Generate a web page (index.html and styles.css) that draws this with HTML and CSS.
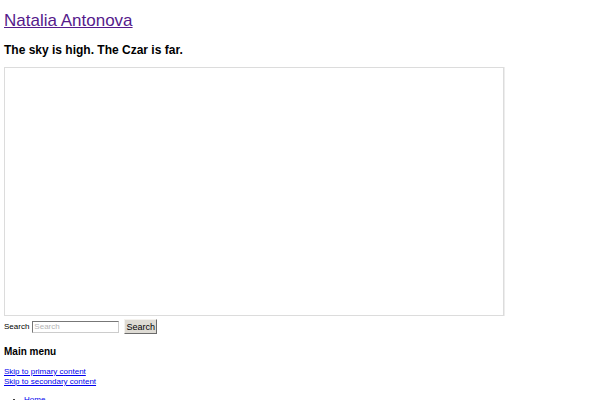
FILE: index.html
```html
<!DOCTYPE html>
<html>
<head>
<meta charset="utf-8">
<title>Natalia Antonova</title>
<link rel="stylesheet" href="styles.css">
</head>
<body>
<header class="site-header">
  <h1 class="site-title"><a href="#">Natalia Antonova</a></h1>
  <h2 class="site-description">The sky is high. The Czar is far.</h2>
  <div class="header-frame"></div>
  <form class="search-form">
    <label class="search-label" for="s">Search</label>
    <input class="search-input" id="s" type="text" placeholder="Search">
    <button class="search-button" type="button">Search</button>
  </form>
</header>
<nav class="main-nav">
  <h3 class="menu-title">Main menu</h3>
  <div class="skip-links">
    <a href="#">Skip to primary content</a>
    <a href="#">Skip to secondary content</a>
  </div>
  <ul class="menu">
    <li><a href="#">Home</a></li>
  </ul>
</nav>
</body>
</html>
```
FILE: styles.css
```css
html, body {
  margin: 0;
  padding: 0;
  background: #fff;
}
body {
  padding: 4px;
  font-family: "Liberation Sans", Arial, sans-serif;
  font-size: 8px;
  line-height: 10px;
  color: #000;
}
.site-header {
  display: flex;
  flex-direction: column;
  align-items: flex-start;
}
.site-title {
  margin: 7px 0 0;
  font-size: 17px;
  line-height: 20px;
  font-weight: normal;
}
.site-title a {
  color: #551a8b;
}
.site-description {
  margin: 12px 0 0;
  font-size: 12px;
  line-height: 14px;
  font-weight: bold;
}
.header-frame {
  margin-top: 10px;
  width: 498px;
  height: 247px;
  border: 1px solid #dcdcdc;
  box-shadow: 1px 0 0 #ededed;
}
.search-form {
  margin: 3px 0 0;
  display: flex;
  align-items: center;
  height: 15px;
}
.search-label {
  font-size: 8px;
  line-height: 10px;
  margin-right: 3px;
}
.search-input {
  box-sizing: border-box;
  width: 87px;
  height: 12px;
  margin: 0 5px 0 0;
  padding: 0 1px;
  font-family: "Liberation Sans", Arial, sans-serif;
  font-size: 8px;
  border-style: solid;
  border-width: 1px;
  border-color: #777 #ccc #ccc #777;
  background: #fff;
}
.search-input::placeholder {
  color: #b5b5b5;
}
.search-button {
  box-sizing: border-box;
  width: 33px;
  height: 15px;
  margin: 0;
  padding: 0;
  font-family: "Liberation Sans", Arial, sans-serif;
  font-size: 9px;
  font-weight: normal;
  color: #000;
  background: #dedbd4;
  border-style: solid;
  border-width: 1px;
  border-color: #f4f2ee #6b6b6b #6b6b6b #f4f2ee;
}
.menu-title {
  margin: 12px 0 0;
  font-size: 10px;
  line-height: 12px;
  font-weight: bold;
}
.skip-links {
  margin-top: 9px;
  display: flex;
  flex-direction: column;
  align-items: flex-start;
}
.skip-links a {
  color: #0000ee;
  line-height: 10px;
}
.menu {
  margin: 8px 0 0;
  padding-left: 20px;
}
.menu a {
  color: #0000ee;
}
```
